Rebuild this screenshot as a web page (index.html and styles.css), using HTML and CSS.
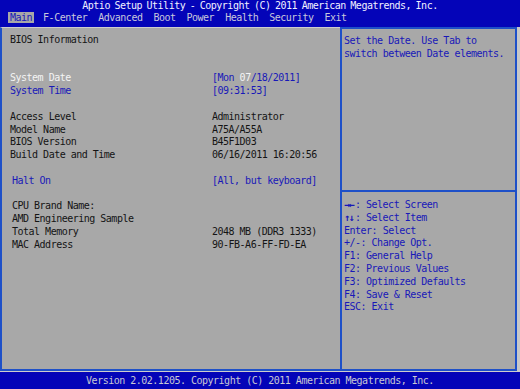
FILE: index.html
```html
<!DOCTYPE html>
<html lang="en">
<head>
  <meta charset="UTF-8">
  <title>Aptio Setup Utility</title>
  <link rel="stylesheet" href="styles.css">
</head>
<body>
  <div class="screen">
    <header class="topbar">
      <div class="title">Aptio Setup Utility - Copyright (C) 2011 American Megatrends, Inc.</div>
      <nav class="tabs">
        <span class="tab active">Main</span>
        <span class="tab">F-Center</span>
        <span class="tab">Advanced</span>
        <span class="tab">Boot</span>
        <span class="tab">Power</span>
        <span class="tab">Health</span>
        <span class="tab">Security</span>
        <span class="tab">Exit</span>
      </nav>
    </header>

    <main class="body">
      <section class="info">
        <div class="row">BIOS Information</div>
        <div class="row blank"></div>
        <div class="row blank"></div>
        <div class="row item">
          <span class="label selected">System Date</span>
          <span class="value link">[Mon <span class="selected">07</span>/18/2011]</span>
        </div>
        <div class="row item">
          <span class="label link">System Time</span>
          <span class="value link">[09:31:53]</span>
        </div>
        <div class="row blank"></div>
        <div class="row item"><span class="label">Access Level</span><span class="value">Administrator</span></div>
        <div class="row item"><span class="label">Model Name</span><span class="value">A75A/A55A</span></div>
        <div class="row item"><span class="label">BIOS Version</span><span class="value">B45F1D03</span></div>
        <div class="row item"><span class="label">Build Date and Time</span><span class="value">06/16/2011 16:20:56</span></div>
        <div class="row blank"></div>
        <div class="group">
          <div class="row item">
            <span class="label link">Halt On</span>
            <span class="value link">[All, but keyboard]</span>
          </div>
          <div class="row blank"></div>
          <div class="row">CPU Brand Name:</div>
          <div class="row">AMD Engineering Sample</div>
          <div class="row item"><span class="label">Total Memory</span><span class="value">2048 MB (DDR3 1333)</span></div>
          <div class="row item"><span class="label">MAC Address</span><span class="value">90-FB-A6-FF-FD-EA</span></div>
        </div>
      </section>

      <aside class="side">
        <div class="help">
          <div class="row">Set the Date. Use Tab to</div>
          <div class="row">switch between Date elements.</div>
        </div>
        <div class="keys">
          <div class="row"><span class="arrows">→←</span>: Select Screen</div>
          <div class="row"><span class="arrows">↑↓</span>: Select Item</div>
          <div class="row">Enter: Select</div>
          <div class="row">+/-: Change Opt.</div>
          <div class="row">F1: General Help</div>
          <div class="row">F2: Previous Values</div>
          <div class="row">F3: Optimized Defaults</div>
          <div class="row">F4: Save &amp; Reset</div>
          <div class="row">ESC: Exit</div>
        </div>
      </aside>
      <div class="edge"></div>
    </main>

    <footer class="foot">Version 2.02.1205. Copyright (C) 2011 American Megatrends, Inc.</footer>
  </div>
</body>
</html>
```

FILE: styles.css
```css
/* Base BIOS look */
* {
  box-sizing: border-box;
  margin: 0;
  padding: 0;
}

body {
  width: 520px;
  height: 389px;
  overflow: hidden;
  background: #a8a8a8;
  font-family: "DejaVu Sans Mono", "Liberation Mono", monospace;
  font-size: 10px;
  letter-spacing: -0.5px;
  color: #141414;
}

.screen {
  display: flex;
  flex-direction: column;
  height: 389px;
}

/* Top bar */
.topbar {
  background: #0404b8;
  height: 27px;
  padding-bottom: 4px;
}

.title {
  height: 11px;
  line-height: 11px;
  text-align: center;
  color: #f0f0ff;
  word-spacing: -1px;
}

.tabs {
  display: flex;
  margin-top: 1px;
  padding-left: 8px;
  height: 11px;
}

.tab {
  line-height: 11px;
  padding: 0 2px;
  margin-right: 7px;
  color: #c8c8dc;
}

.tab.active {
  background: #a8a8a8;
  color: #1818b8;
}

/* Main area */
.body {
  display: flex;
  height: 345px;
}

.info {
  width: 340px;
  border-top: 1px solid #cdcdcd;
  border-left: 2px solid #1e50c8;
  border-bottom: 2px solid #1e50c8;
  padding: 6px 0 0 8px;
}

.row {
  height: 12.8px;
  line-height: 12.8px;
  white-space: pre;
}

.item {
  display: grid;
  grid-template-columns: 202px 1fr;
}

.group {
  padding-left: 2px;
}

.group .item {
  grid-template-columns: 200px 1fr;
}

.link {
  color: #1818b8;
}

.selected {
  color: #f4f4f4;
}

/* Right side help */
.side {
  width: 177px;
  border: 2px solid #1e50c8;
  display: flex;
  flex-direction: column;
}

.help {
  height: 163px;
  padding: 6px 0 0 2px;
  border-bottom: 2px solid #1e50c8;
  color: #1818b8;
}

.keys {
  padding: 7px 0 0 2px;
  color: #1818b8;
}

.arrows {
  display: inline-block;
  width: 11px;
  font-weight: bold;
  letter-spacing: -1.5px;
}

.edge {
  flex: 1;
  background: #c8c8c8;
}

/* Footer */
.foot {
  flex: 1;
  border-top: 1px solid #cdcdcd;
  background: #0404b8;
  color: #c8c8d4;
  text-align: center;
  line-height: 17px;
}
```
